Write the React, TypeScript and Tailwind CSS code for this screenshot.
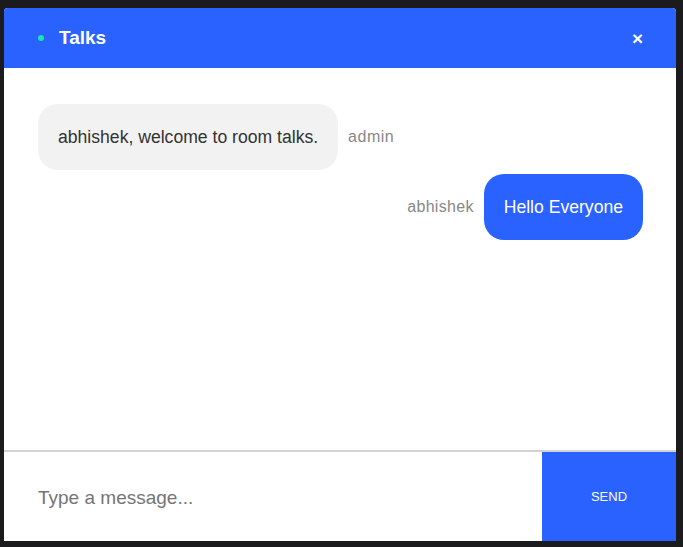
import React from "react";

export default function App() {
  return (
    <div className="w-[683px] h-[547px] bg-[#1b1b1d] pt-[8px] pl-[4px]" style={{ fontFamily: '"Liberation Sans", Arial, sans-serif' }}>
      <div className="w-[672px] h-[533px] bg-white rounded-t-[4px] overflow-hidden flex flex-col">
        <div className="h-[60px] bg-[#2962ff] flex items-center pl-[34px] pr-[33px] shrink-0">
          <span className="w-[6px] h-[6px] rounded-full bg-[#14e8b0]" />
          <span className="ml-[15px] text-white font-bold text-[19px]">Talks</span>
          <span className="ml-auto text-white font-bold text-[19px] leading-none">×</span>
        </div>
        <div className="flex-1 flex flex-col gap-[4px] pt-[36px] pl-[34px] pr-[33px]">
          <div className="flex items-center gap-[10px]">
            <div className="bg-[#f2f2f2] rounded-[20px] px-[20px] h-[66px] flex items-center text-[17.6px] text-[#333]">
              abhishek, welcome to room talks.
            </div>
            <span className="text-[16px] tracking-[0.5px] text-[#888]">admin</span>
          </div>
          <div className="flex items-center justify-end gap-[10px]">
            <span className="text-[16px] tracking-[0.3px] text-[#888]">abhishek</span>
            <div className="bg-[#2962ff] rounded-[20px] px-[20px] h-[66px] flex items-center text-[17.6px] text-white">
              Hello Everyone
            </div>
          </div>
        </div>
        <div className="h-[91px] border-t-2 border-[#d3d3d3] flex shrink-0">
          <div className="flex-1 flex items-center pl-[34px] pt-[3px] text-[19px] text-[#757575]">Type a message...</div>
          <div className="w-[134px] bg-[#2962ff] flex items-center justify-center text-white text-[13px]">SEND</div>
        </div>
      </div>
    </div>
  );
}
